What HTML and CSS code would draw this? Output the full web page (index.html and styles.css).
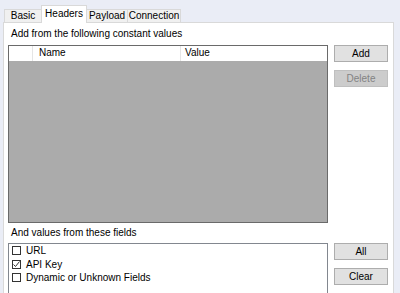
FILE: index.html
```html
<!DOCTYPE html>
<html lang="en">
<head>
	<meta charset="utf-8">
	<title>Headers</title>
	<link rel="stylesheet" href="styles.css">
</head>
<body>

	<div class="tabs">
		<div class="tab">Basic</div>
		<div class="tab active">Headers</div>
		<div class="tab">Payload</div>
		<div class="tab">Connection</div>
	</div>

	<div class="panel">
		<div class="caption top-caption">Add from the following constant values</div>

		<div class="row">
			<div class="grid">
				<div class="grid-head">
					<span class="col-sel"></span>
					<span class="col-name">Name</span>
					<span class="col-value">Value</span>
				</div>
				<div class="grid-body"></div>
			</div>
			<div class="buttons">
				<button class="btn">Add</button>
				<button class="btn" disabled>Delete</button>
			</div>
		</div>

		<div class="caption">And values from these fields</div>

		<div class="row">
			<div class="checklist">
				<label class="check-item">
					<span class="box"></span>URL
				</label>
				<label class="check-item">
					<span class="box">
						<svg width="9" height="9" viewBox="0 0 9 9"><polyline points="1.5,4.5 3.5,6.5 7.5,1.5" fill="none" stroke="#333" stroke-width="1"/></svg>
					</span>API Key
				</label>
				<label class="check-item">
					<span class="box"></span>Dynamic or Unknown Fields
				</label>
			</div>
			<div class="buttons">
				<button class="btn">All</button>
				<button class="btn">Clear</button>
			</div>
		</div>
	</div>

</body>
</html>
```

FILE: styles.css
```css
* {
	box-sizing: border-box;
}

body, html {
	margin: 0;
	padding: 0;
	height: 100%;
	overflow: hidden;
}

body {
	background: #eaedf6;
	font-family: "Liberation Sans", Arial, sans-serif;
	font-size: 10px;
	color: #000;
}

.tabs {
	display: flex;
	align-items: flex-end;
	height: 23px;
	padding-left: 4px;
	position: relative;
	z-index: 1;
}

.tab {
	height: 13px;
	line-height: 12px;
	text-align: center;
	background: #f0f0f0;
	border: 1px solid #d9d9d9;
	border-bottom: none;
	margin-bottom: 1px;
	margin-left: -1px;
}

.tab:first-child {
	margin-left: 0;
	width: 38px;
}

.tab:nth-child(3) {
	width: 42px;
}

.tab:nth-child(4) {
	width: 54px;
}

.tab.active {
	height: 18px;
	line-height: 16px;
	background: #fff;
	margin-bottom: 0;
	width: 46px;
}

.panel {
	margin-top: -1px;
	margin-left: 3px;
	width: 391px;
	height: 300px;
	background: #fff;
	border: 1px solid #d9d9d9;
	padding: 0 0 0 4px;
}

.caption {
	height: 16px;
	line-height: 16px;
	padding-left: 3px;
	margin: 2px 0 2px;
}

.top-caption {
	margin: 3px 0 3px;
}

.row {
	display: grid;
	grid-template-columns: 320px 54px;
	column-gap: 6px;
}

.grid {
	height: 178px;
	border: 1px solid #6a6a6a;
	display: flex;
	flex-direction: column;
}

.grid-head {
	display: flex;
	height: 15px;
	background: #fff;
	line-height: 14px;
}

.grid-head span {
	border-right: 1px solid #e5e5e5;
	padding-left: 6px;
}

.col-sel {
	width: 24px;
}

.col-name {
	width: 148px;
}

.col-value {
	flex: 1;
	border-right: none !important;
	padding-left: 4px !important;
}

.grid-body {
	flex: 1;
	background: #ababab;
}

.buttons {
	display: flex;
	flex-direction: column;
	gap: 8px;
}

.btn {
	height: 17px;
	padding: 0;
	font: inherit;
	line-height: 14px;
	color: #000;
	background: #e1e1e1;
	border: 1px solid #adadad;
}

.btn:disabled {
	background: #cccccc;
	border-color: #bfbfbf;
	color: #838383;
}

.checklist {
	height: 60px;
	border: 1px solid #82878f;
	padding: 0 0 0 3px;
}

.check-item {
	display: flex;
	align-items: center;
	height: 13.5px;
	line-height: 13px;
}

.box {
	width: 9px;
	height: 9px;
	border: 1px solid #333;
	background: #fff;
	margin-right: 5px;
	display: flex;
}

.box svg {
	margin: -1px;
}
```
